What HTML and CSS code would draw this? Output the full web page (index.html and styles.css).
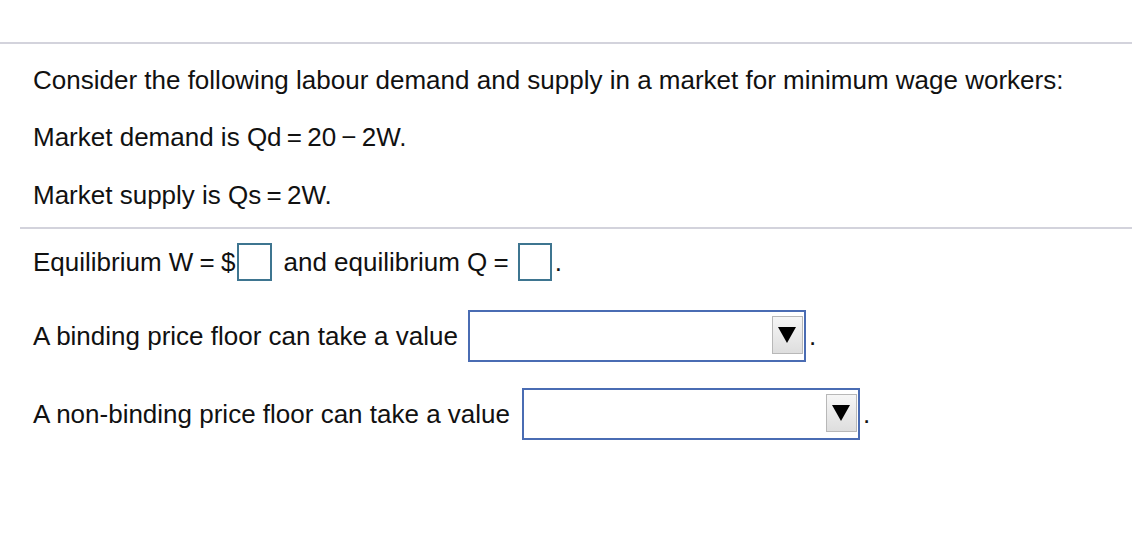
FILE: index.html
```html
<!DOCTYPE html>
<html>
<head>
<meta charset="utf-8">
<link rel="stylesheet" href="styles.css">
</head>
<body>
<div class="top-rule"></div>
<div class="section">
  <div class="row r1">Consider the following labour demand and supply in a market for minimum wage workers:</div>
  <div class="row r2"><span>Market demand is <span class="eq">Qd = 20 − 2W.</span></span></div>
  <div class="row r3"><span>Market supply is <span class="eq">Qs = 2W.</span></span></div>
  <div class="rule"></div>
  <div class="row r4">
    <span>Equilibrium <span class="eq2">W = $</span></span><span class="box box-w"></span><span>and equilibrium <span class="eq2">Q =</span></span><span class="box box-q"></span><span>.</span>
  </div>
  <div class="row r5">
    <span>A binding price floor can take a value</span>
    <span class="select s1"><span class="btn"><span class="tri"></span></span></span>
    <span class="dot">.</span>
  </div>
  <div class="row r6">
    <span>A non-binding price floor can take a value</span>
    <span class="select s2"><span class="btn"><span class="tri"></span></span></span>
    <span class="dot">.</span>
  </div>
</div>
</body>
</html>
```
FILE: styles.css
```css
html, body {
  margin: 0;
  padding: 0;
  background: #ffffff;
}
body {
  font-family: "Liberation Sans", Arial, sans-serif;
  font-size: 26px;
  color: #111111;
  width: 1132px;
  height: 537px;
  overflow: hidden;
}
.top-rule {
  margin-top: 42px;
  height: 2px;
  background: #d3d3dc;
}
.section {
  padding-left: 20px;
}
.row {
  display: flex;
  align-items: center;
  padding-left: 13px;
  white-space: nowrap;
}
.eq { word-spacing: -2px; }
.eq2 { word-spacing: -1px; }
.r1 { margin-top: 21px; height: 30px; }
.r2 { margin-top: 27px; height: 30px; }
.r3 { margin-top: 28px; height: 30px; }
.rule {
  margin-top: 17px;
  height: 2px;
  background: #d3d3dc;
}
.r4 { margin-top: 14px; height: 38px; }
.box {
  display: inline-block;
  box-sizing: border-box;
  border: 2px solid #3e7590;
  height: 38px;
  background: #fff;
}
.box-w { width: 35px; margin-left: 2px; margin-right: 11px; }
.box-q { width: 34px; margin-left: 9px; margin-right: 3px; }
.r5 { margin-top: 29px; height: 52px; }
.r6 { margin-top: 26px; height: 52px; }
.select {
  box-sizing: border-box;
  display: flex;
  justify-content: flex-end;
  align-items: flex-start;
  height: 52px;
  border: 2px solid #4a6cb3;
  background: #fff;
  padding-right: 1px;
  padding-top: 4px;
}
.s1 { width: 338px; margin-left: 10px; }
.s2 { width: 338px; margin-left: 12px; }
.btn {
  box-sizing: border-box;
  width: 31px;
  height: 38px;
  border: 1px solid #b8b8b8;
  background: linear-gradient(#f6f6f6, #dedede);
  display: flex;
  align-items: center;
  justify-content: center;
}
.tri {
  width: 0;
  height: 0;
  border-left: 9px solid transparent;
  border-right: 9px solid transparent;
  border-top: 16px solid #000;
}
.dot { margin-left: 3px; }
```
